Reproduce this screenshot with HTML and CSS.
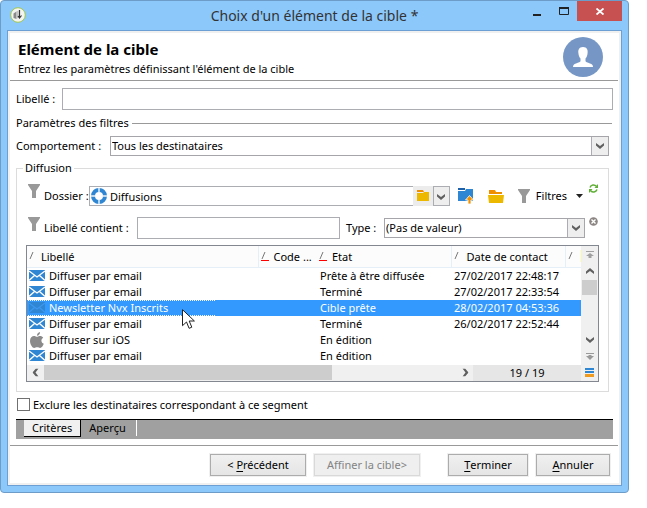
FILE: index.html
```html
<!DOCTYPE html>
<html lang="fr">
<head>
<meta charset="utf-8">
<title>Choix d'un élément de la cible</title>
<link rel="stylesheet" href="styles.css">
</head>
<body>
<svg class="defs" aria-hidden="true">
  <symbol id="funnel" viewBox="0 0 12 14"><path d="M0 0h12v1L8 7v7H4V7L0 1z" fill="#999"/></symbol>
  <symbol id="chevron" viewBox="0 0 8 7"><path d="M0 1l4 3 4-3v2.600L4 7 0 3.600z" fill="#606060"/></symbol>
  <symbol id="mail" viewBox="0 0 16 11"><path d="M0 0h16v11H0z" fill="#2f86d2"/><path d="M0 1l8 6 8-6M0 10.500l5.500-5M16 10.500l-5.500-5" fill="none" stroke="currentColor" stroke-width="1.300"/></symbol>
  <symbol id="sort" viewBox="0 0 8 12"><path d="M1 8l3-7" fill="none" stroke="#777"/></symbol>
  <symbol id="sort-red" viewBox="0 0 8 12"><path d="M1 8l3-7" fill="none" stroke="#777"/><path d="M0 9h8v1H0z" fill="#f00"/></symbol>
</svg>
<main class="window">
  <header class="titlebar">
    <svg class="app-icon" viewBox="0 0 16 16"><circle cx="8" cy="8" r="7.300" fill="#f4f4f2" stroke="#a3c84a" stroke-width="1"/><path d="M3.500 6.500l3-2v7.500l-3-1z" fill="#8a8a8a"/><path d="M6.500 4.500l2-1v7l-2 1.500z" fill="#c4c4c4"/><path d="M9.500 3v7.500M11.500 8.500l-2 2.500-1.500-2" fill="none" stroke="#333" stroke-width="1.200"/></svg>
    <h1>Choix d'un élément de la cible *</h1>
    <div class="window-buttons">
      <button class="minimize" aria-label="Réduire"><svg width="8" height="12"><path d="M0 9h8v2H0z" fill="#222"/></svg></button>
      <button class="maximize" aria-label="Agrandir"><svg width="10" height="8"><path d="M.5 1h9v6.500h-9z" fill="none" stroke="#222"/><path d="M0 0h10v2H0z" fill="#222"/></svg></button>
      <button class="close" aria-label="Fermer"><svg width="8" height="7"><path d="M.5.5l7 6M7.500.5l-7 6" stroke="#fff" stroke-width="1.800"/></svg></button>
    </div>
  </header>
  <div class="content">
    <header class="intro">
      <div>
        <h2>Elément de la cible</h2>
        <p>Entrez les paramètres définissant l'élément de la cible</p>
      </div>
      <svg class="avatar" viewBox="0 0 40 40"><circle cx="20" cy="20" r="20" fill="#7697c5"/><path d="M20 10c-4 0-5 3-4.600 6 .2 3 1.200 4.500 2.100 5.500v2.500c0 1-2 1.500-4.500 2.500-2 .8-3 1.500-3 3.500h20c0-2-1-2.700-3-3.500-2.500-1-4.500-1.500-4.500-2.500v-2.500c.9-1 1.900-2.500 2.100-5.500.4-3-.6-6-4.600-6z" fill="#fff"/></svg>
    </header>
    <form class="form">
      <div class="row label-row">
        <label for="libelle">Libellé :</label>
        <input id="libelle" type="text">
      </div>
      <h3 class="section">Paramètres des filtres</h3>
      <div class="row behaviour-row">
        <label for="comportement">Comportement :</label>
        <span class="select"><select id="comportement"><option>Tous les destinataires</option></select><svg><use href="#chevron"/></svg></span>
      </div>
      <fieldset>
        <legend>Diffusion</legend>
        <div class="row folder-row">
          <svg class="funnel"><use href="#funnel"/></svg>
          <label for="dossier">Dossier :</label>
          <span class="combo">
            <svg class="ring" viewBox="0 0 16 16"><circle cx="8" cy="8" r="6" fill="none" stroke="#2f86d2" stroke-width="4"/><path d="M7 0h2v4H7zM7 12h2v4H7zM0 7h4v2H0zM12 7h4v2h-4z" fill="#b9d8f1"/></svg>
            <input id="dossier" type="text" value="Diffusions">
            <button type="button" class="browse" aria-label="Parcourir"><svg width="12" height="12"><path d="M0 0h6l1 2H0z" fill="#ef8e00"/><path d="M0 3h6l1-1h5v9H0z" fill="#edb900"/></svg></button>
            <button type="button" class="drop" aria-label="Ouvrir la liste"><svg><use href="#chevron"/></svg></button>
          </span>
          <span class="tools">
            <button type="button" aria-label="Dossier parent"><svg width="16" height="16"><path d="M0 0h7v2H0z" fill="#1d62aa"/><path d="M0 3h7l1-2h7v12H0z" fill="#2f86d2"/><path d="M11.500 7.500l4 4.500H13v4h-3v-4H7.500z" fill="#f39200" stroke="#fff" stroke-width=".8"/></svg></button>
            <button type="button" aria-label="Ouvrir"><svg width="16" height="13"><path d="M1 0h6l1 2h6v2H1z" fill="#ef8e00"/><path d="M0 5h16l-1 8H1z" fill="#edb900"/></svg></button>
            <button type="button" class="filters"><svg class="funnel"><use href="#funnel"/></svg>Filtres<svg class="caret" width="7" height="4"><path d="M0 0h7L3.500 4z" fill="#222"/></svg></button>
          </span>
          <button type="button" class="corner" aria-label="Actualiser"><svg width="9" height="9" viewBox="0 0 9 9"><path d="M1 3.500C2 .7 5.500.3 7.300 2.300M8 5.500C7 8.300 3.500 8.700 1.700 6.700" fill="none" stroke="#5fae35" stroke-width="1.500"/><path d="M9 0v4H5.500zM0 9V5h3.500z" fill="#5fae35"/></svg></button>
        </div>
        <div class="row type-row">
          <svg class="funnel"><use href="#funnel"/></svg>
          <label for="contient">Libellé contient :</label>
          <input id="contient" type="text">
          <label for="type">Type :</label>
          <span class="select"><select id="type"><option>(Pas de valeur)</option></select><svg><use href="#chevron"/></svg></span>
          <button type="button" class="corner" aria-label="Effacer"><svg width="9" height="9" viewBox="0 0 9 9"><circle cx="4.500" cy="4.500" r="4.300" fill="#8b8583"/><path d="M2.500 2.500l4 4M6.500 2.500l-4 4" stroke="#fff" stroke-width="1.400"/></svg></button>
        </div>
        <div class="list">
          <div class="list-main">
            <table>
              <colgroup><col><col class="col-code"><col class="col-state"><col class="col-date"><col class="col-more"></colgroup>
              <thead>
                <tr><th><svg><use href="#sort"/></svg>Libellé</th><th><svg><use href="#sort-red"/></svg>Code ...</th><th><svg><use href="#sort-red"/></svg>Etat</th><th><svg><use href="#sort"/></svg>Date de contact</th><th class="more"><svg><use href="#sort"/></svg></th></tr>
              </thead>
              <tbody>
                <tr><td><span class="name"><svg><use href="#mail"/></svg>Diffuser par email</span></td><td></td><td>Prête à être diffusée</td><td>27/02/2017 22:48:17</td><td></td></tr>
                <tr><td><span class="name"><svg><use href="#mail"/></svg>Diffuser par email</span></td><td></td><td>Terminé</td><td>27/02/2017 22:33:54</td><td></td></tr>
                <tr class="selected"><td><span class="name"><svg><use href="#mail"/></svg>Newsletter Nvx Inscrits</span><svg class="pointer" viewBox="0 0 13 21"><path d="M.5.7v16l4-3.700 2.600 6.300 2.700-1.100L7.200 12h5.200z" fill="#fff" stroke="#222"/></svg></td><td></td><td>Cible prête</td><td>28/02/2017 04:53:36</td><td></td></tr>
                <tr><td><span class="name"><svg><use href="#mail"/></svg>Diffuser par email</span></td><td></td><td>Terminé</td><td>26/02/2017 22:52:44</td><td></td></tr>
                <tr><td><span class="name"><svg class="apple" viewBox="0 0 14 16"><path d="M10 0c.2 2-1.300 3.700-3 3.700C6.800 2 8.300.3 10 0zM7 4.800c.8 0 1.500-.8 3-.8 1.300 0 2.500.7 3.200 1.700-2.700 1.600-2.200 5 .6 6.100C13 14 11.500 16 10.200 16c-1.200 0-1.600-.7-3-.7s-1.900.7-3 .7C2.500 16 0 12.500 0 9c0-3.300 2.100-5 4-5 1.400 0 2.200.8 3 .8z" fill="#8a8a8a"/></svg>Diffuser sur iOS</span></td><td></td><td>En édition</td><td></td><td></td></tr>
                <tr><td><span class="name"><svg><use href="#mail"/></svg>Diffuser par email</span></td><td></td><td>En édition</td><td></td><td></td></tr>
              </tbody>
            </table>
            <div class="bottom">
              <button type="button" aria-label="Défiler à gauche"><svg class="left"><use href="#chevron"/></svg></button>
              <div class="track"><div class="thumb"></div></div>
              <button type="button" aria-label="Défiler à droite"><svg class="right"><use href="#chevron"/></svg></button>
              <output>19 / 19</output>
            </div>
          </div>
          <div class="vertical">
            <button type="button" class="first" aria-label="Première ligne"><svg width="8" height="7"><path d="M0 0h8v1H0zM4 2l4 3H5.500v2h-3V5H0z" fill="#a0a0a0"/></svg></button>
            <button type="button" aria-label="Défiler vers le haut"><svg class="up"><use href="#chevron"/></svg></button>
            <div class="vtrack"><div class="vthumb"></div></div>
            <button type="button" aria-label="Défiler vers le bas"><svg><use href="#chevron"/></svg></button>
            <button type="button" aria-label="Dernière ligne"><svg width="8" height="7"><path d="M0 0h8v1H0zM2.500 2h3v1H8L4 7 0 3h2.500z" fill="#999"/></svg></button>
            <button type="button" class="options" aria-label="Configurer la liste"><svg width="9" height="9"><path d="M0 0h9v2H0zM0 3h9v2H0z" fill="#2f86d2"/><path d="M0 6h9v3H0z" fill="#ef9a20"/></svg></button>
          </div>
        </div>
      </fieldset>
      <label class="exclude"><input type="checkbox">Exclure les destinataires correspondant à ce segment</label>
      <nav class="tabs">
        <button type="button" class="active">Critères</button>
        <button type="button">Aperçu</button>
      </nav>
    </form>
    <footer>
      <button>&lt; <u>P</u>récédent</button>
      <button disabled>Affiner la cible&gt;</button>
      <button class="finish"><u>T</u>erminer</button>
      <button class="cancel"><u>A</u>nnuler</button>
    </footer>
  </div>
</main>
</body>
</html>
```
FILE: styles.css
```css
* { box-sizing: border-box; }
body { margin: 0; background: #fff; color: #000; font: 11px/16px "Noto Sans", "Open Sans", sans-serif; }
h1, h2, h3, p { margin: 0; font-weight: normal; }
button, input, select { margin: 0; padding: 0; border: 0; border-radius: 0; background: none; color: inherit; font: inherit; }
button { display: flex; align-items: center; justify-content: center; }
svg { display: block; flex: none; }
.defs { position: absolute; width: 0; height: 0; }

.window { margin-right: 18px; padding: 0 6px; padding-bottom: 6px; border: 1px solid #6e9cc8; border-radius: 4px; background: #8dc8fb; }
.titlebar { display: flex; height: 29px; padding-left: 3px; }
.app-icon { width: 16px; height: 16px; margin-top: 6px; }
.titlebar h1 { flex: 1; padding-left: 80px; color: #333; font-size: 14px; line-height: 30px; text-align: center; }
.window-buttons { display: flex; align-items: flex-start; }
.window-buttons button { height: 20px; }
.minimize { width: 28px; }
.maximize { width: 26px; }
.window-buttons .close { width: 45px; background: #c75050; }

.content { border: 1px solid #6ca0d4; background: #fff; box-shadow: inset 0 0 0 2px #f0f0f0; padding: 2px; }
.intro { display: flex; justify-content: space-between; padding: 4px 15px 3px 8px; margin-right: 1px; border-bottom: 1px solid #999; }
.intro h2 { font-size: 15px; font-weight: bold; line-height: 24px; }
.avatar { width: 40px; height: 40px; }
.form { padding: 7px 6px 6px; }
.row { display: flex; align-items: center; }
.row label { flex: none; }
input[type="text"] { min-width: 0; height: 22px; border: 1px solid #abadb3; background: #fff; }
.label-row label { width: 46px; }
.label-row input { flex: 1; }
.section { display: flex; align-items: center; gap: 3px; height: 26px; padding-right: 1px; font-size: 11px; }
.section::after { content: ""; flex: 1; height: 1px; background: #999; }
.select { position: relative; display: block; flex: 1; }
.select select { display: block; width: 100%; height: 20px; padding: 0 18px 0 1px; border: 1px solid #a5a5aa; appearance: none; background: linear-gradient(90deg, #abadb3 1px, #eee 1px) right / 17px 100% no-repeat; }
.select svg { position: absolute; right: 5px; top: 6px; width: 8px; height: 7px; pointer-events: none; }
.behaviour-row { padding-right: 4px; }
.behaviour-row label { width: 94px; }

fieldset { min-width: 0; margin: 4px 4px 0 0; padding: 8px 9px 9px; border: 1px solid #dcdcdc; }
legend { height: 16px; margin-left: -3px; padding: 0 2px; }
.funnel { width: 12px; height: 14px; }
.folder-row { height: 24px; }
.folder-row > .funnel, .type-row > .funnel { align-self: flex-start; margin-right: 4px; }
.folder-row label { width: 45px; }
.combo { display: flex; align-items: center; flex: 1; height: 20px; border: 1px solid #abadb3; }
.combo .ring { width: 16px; height: 16px; margin: 0 3px 0 1px; }
.combo input[type="text"] { flex: 1; width: 0; height: 18px; border: 0; }
.browse { width: 20px; height: 20px; background: #ececec; }
.drop { width: 17px; height: 20px; margin-right: -1px; border: 1px solid #abadb3; background: #eee; }
.drop svg { width: 8px; height: 7px; }
.tools { display: flex; align-items: center; gap: 14px; margin-left: 8px; }
.filters { gap: 6px; }
.caret { margin-left: 3px; }
.corner { align-self: flex-start; margin: 0 1px 0 6px; }
.folder-row, .type-row { padding-left: 2px; }
.type-row { margin: 9px 0 6px; }
.type-row label { width: 93px; }
.type-row > input[type="text"] { flex: 1; }
.type-row .corner { margin-left: 4px; }
.type-row input + label { width: 38px; margin-left: 6px; }

.list { display: flex; border: 1px solid #828790; }
.list-main { flex: 1; min-width: 0; }
table { width: 100%; border-collapse: collapse; table-layout: fixed; margin-bottom: 1px; }
.col-code { width: 59px; }
.col-state { width: 134px; }
.col-date { width: 114px; }
.col-more { width: 16px; }
th, td { padding: 0; text-align: left; font-weight: normal; white-space: nowrap; }
th { height: 21px; padding-top: 2px; border-bottom: 1px solid #e5eff8; background: #fcfcfc; }
th:not(:first-child):not(:nth-child(3)) { border-left: 1px solid #e5eff8; }
th svg { display: inline-block; width: 8px; height: 12px; margin: 0 5px 0 2px; vertical-align: -2px; }
th:first-child svg { margin-right: 4px; }
th.more { overflow: hidden; background: linear-gradient(#ffffb8, #ffffb8) right / 1px 12px no-repeat #fcfcfc; }
td { height: 16px; line-height: 16px; padding-left: 3px; }
td:first-child { position: relative; padding-left: 1px; }
.name { display: flex; align-items: center; width: 187px; height: 16px; gap: 4px; padding-left: 1px; }
.name svg { width: 16px; height: 11px; color: #fff; }
.name .apple { height: 16px; }
.selected { background: #39f; color: #fff; }
.selected .name { background: repeating-linear-gradient(90deg, #fff 0 1px, #39f 1px 2px) top / 100% 1px no-repeat, repeating-linear-gradient(90deg, #fff 0 1px, #39f 1px 2px) bottom / 100% 1px no-repeat; }
.selected .name svg { color: #3b97ee; }
.pointer { position: absolute; z-index: 1; left: 155px; top: 9px; width: 13px; height: 21px; }
.bottom { display: flex; height: 16px; background: #f0f0f0; }
.bottom button { width: 17px; }
.bottom svg { width: 8px; height: 7px; }
.left { transform: rotate(90deg); }
.right { transform: rotate(-90deg); }
.up { transform: rotate(180deg); }
.track { flex: 1; }
.thumb { width: 70%; height: 15px; background: #cdcdcd; }
.bottom output { width: 108px; background: #e6e6e6; text-align: center; }
.vertical { display: flex; flex-direction: column; width: 17px; background: #f0f0f0; }
.vertical button { width: 17px; height: 17px; }
.vertical svg { width: 8px; height: 7px; }
.vtrack { flex: 1; }
.vthumb { height: 15px; margin: 0 1px; background: #cdcdcd; }
.vertical .options { height: 16px; }
.vertical .options svg { width: 9px; height: 9px; }

.exclude { display: flex; align-items: center; gap: 3px; margin: 5px 0 6px 1px; }
.exclude input { width: 13px; height: 13px; border: 1px solid #707070; appearance: none; background: #fff; }
.tabs { display: flex; align-items: flex-start; height: 20px; padding-left: 8px; border-top: 1px solid #000; background: #a0a0a0; }
.tabs button { height: 17px; padding: 0 8px; }
.tabs button + button { height: 16px; padding-right: 10px; border-right: 1px solid #fff; }
.tabs .active { border: solid #000; border-width: 0 1px 1px 0; background: #f0f0f0; }
footer { display: flex; justify-content: flex-end; gap: 8px; margin-right: 1px; padding: 8px 8px 7px; border-top: 1px solid #999; }
footer button { width: 96px; height: 22px; border: 1px solid #acacac; background: linear-gradient(#f0f0f0, #e5e5e5); box-shadow: 0 0 0 1px #f0f0f0; white-space: pre; }
footer button:disabled { width: 106px; border-color: #d9d9d9; background: #efefef; color: #838383; }
footer .finish { width: 80px; margin-left: 20px; }
footer .cancel { width: 74px; }
u { text-underline-offset: 2px; }
```
